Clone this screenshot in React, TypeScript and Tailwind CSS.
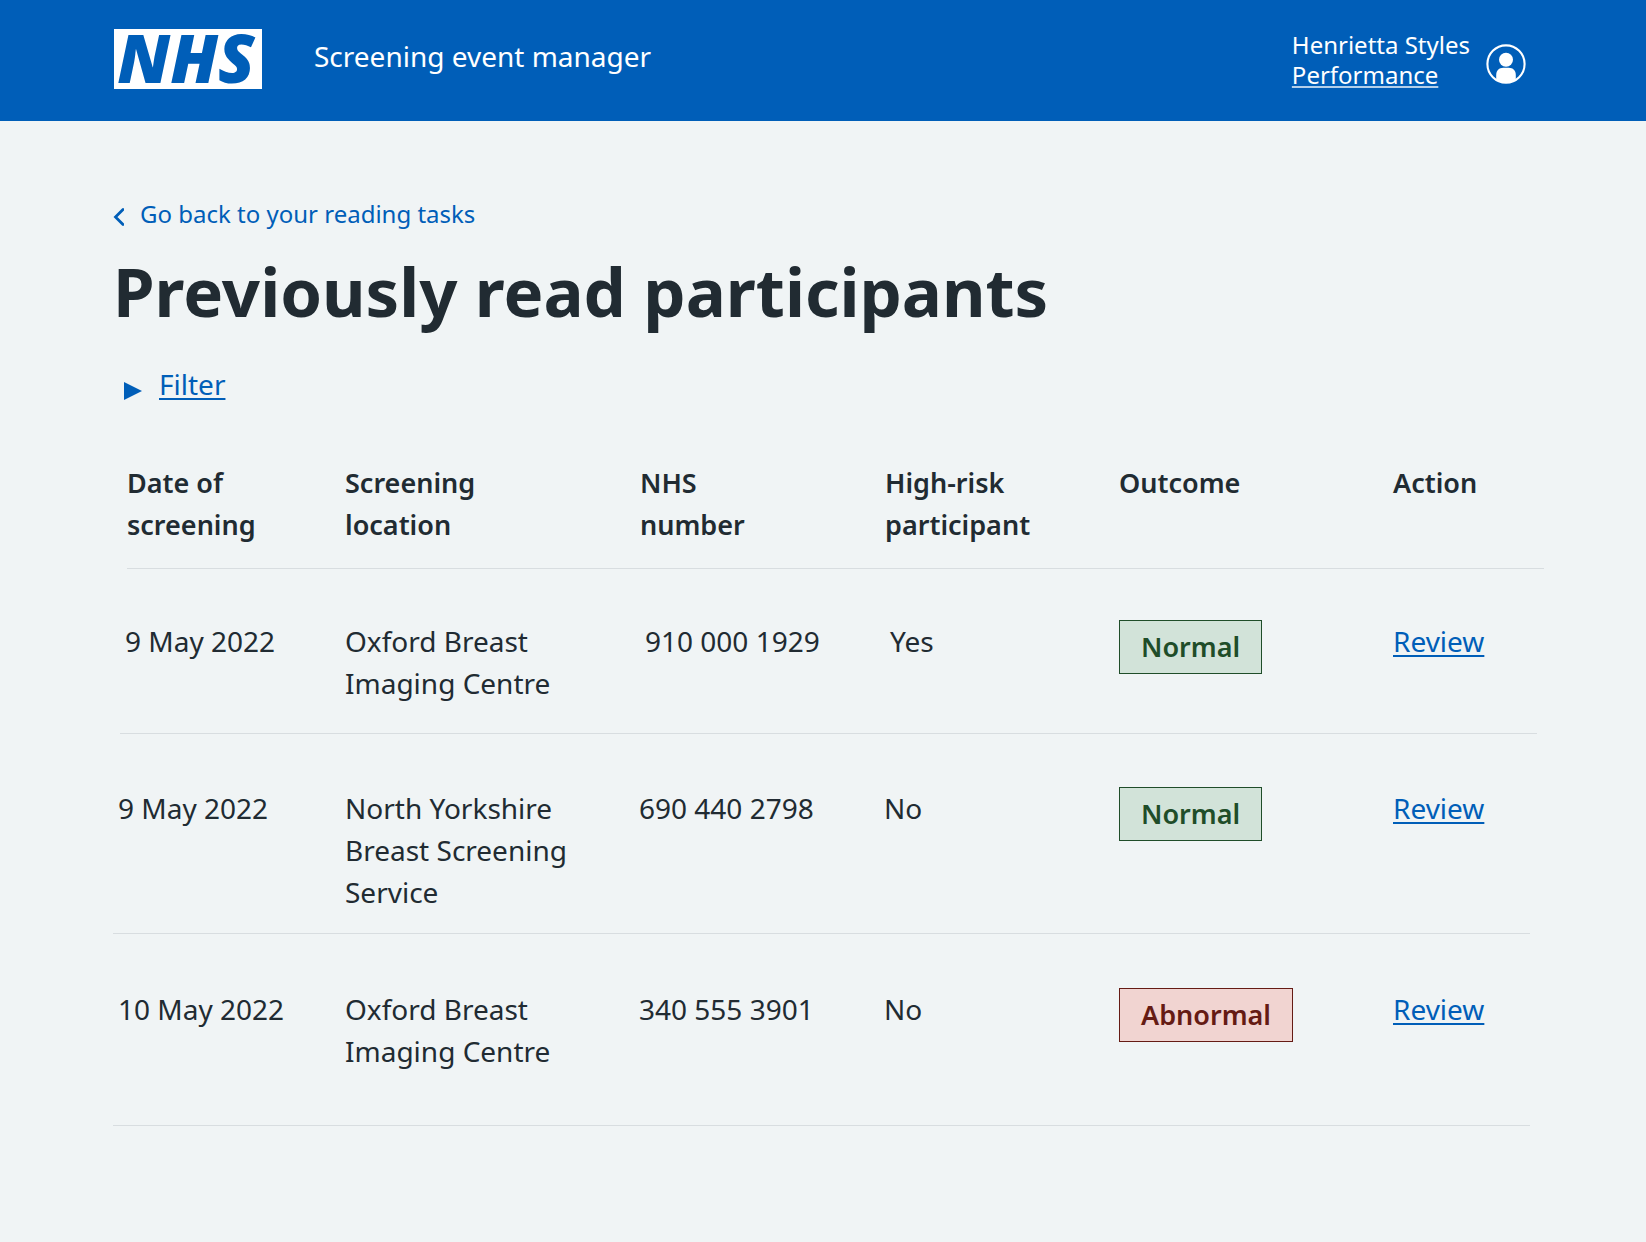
type Outcome = "Normal" | "Abnormal";

type Reading = {
  id: string;
  date: string;
  location: string;
  nhsNumber: string;
  highRisk: string;
  outcome: Outcome;
  layout: string;
};

const readings: Reading[] = [
  {
    id: "r1",
    date: "9 May 2022",
    location: "Oxford Breast Imaging Centre",
    nhsNumber: "910 000 1929",
    highRisk: "Yes",
    outcome: "Normal",
    layout: "ml-[7px] -mr-[7px] grid-cols-[225fr_300fr_245fr_229fr_274fr_144fr] pt-[51px] pb-[29px]",
  },
  {
    id: "r2",
    date: "9 May 2022",
    location: "North Yorkshire Breast Screening Service",
    nhsNumber: "690 440 2798",
    highRisk: "No",
    outcome: "Normal",
    layout: "grid-cols-[232fr_294fr_245fr_235fr_274fr_137fr] pt-[53px] pb-5",
  },
  {
    id: "r3",
    date: "10 May 2022",
    location: "Oxford Breast Imaging Centre",
    nhsNumber: "340 555 3901",
    highRisk: "No",
    outcome: "Abnormal",
    layout: "grid-cols-[232fr_294fr_245fr_235fr_274fr_137fr] pt-[54px] pb-[53px]",
  },
];

const tagStyles: Record<Outcome, string> = {
  Normal: "border-[#1f4d29] bg-[#d2e3d9] text-[#1f4d29]",
  Abnormal: "border-[#651b14] bg-[#f1d4d1] text-[#651b14]",
};

function Logo() {
  return (
    <a
      href="#home"
      aria-label="NHS home"
      className="flex h-[60px] w-[148px] justify-center bg-white pr-1 text-[67px] leading-[56px] font-black text-[#005eb8] italic"
    >
      NHS
    </a>
  );
}

function Avatar() {
  return (
    <svg viewBox="0 0 40 40" className="mt-3.5 size-10" aria-hidden="true">
      <circle cx="20" cy="20" r="18.6" fill="none" stroke="white" strokeWidth="2.1" />
      <circle cx="20" cy="15.7" r="7" fill="white" />
      <path d="M10.2 35.5V31c0-4.500 2.800-7.300 7.200-7.300h5.200c4.400 0 7.200 2.800 7.200 7.300v4.500c-2.800 2.300-6 3.500-9.800 3.500s-7-1.200-9.800-3.500z" fill="white" />
    </svg>
  );
}

function Header() {
  return (
    <header className="flex items-start justify-between bg-[#005eb8] pt-[29px] pr-[120px] pb-[31px] pl-[114px] text-white">
      <div className="flex gap-[52px]">
        <Logo />
        <span className="text-[28px] leading-[54px]">Screening event manager</span>
      </div>
      <div className="flex gap-4 pt-px">
        <div className="text-2xl leading-[30px]">
          <p>Henrietta Styles</p>
          <a href="#performance" className="underline decoration-white/70 decoration-2 underline-offset-2">
            Performance
          </a>
        </div>
        <Avatar />
      </div>
    </header>
  );
}

function ReadingsTable() {
  return (
    <table className="mt-[57px] block">
      <thead className="block text-[27px]">
        <tr className="-mr-[14px] ml-[14px] grid grid-cols-[218fr_295fr_245fr_234fr_274fr_151fr] border-b border-[#d8dde0] pb-[22px] text-left">
          <th scope="col" className="pr-12 font-semibold">Date of screening</th>
          <th scope="col" className="font-semibold">Screening<br />location</th>
          <th scope="col" className="font-semibold">NHS<br />number</th>
          <th scope="col" className="font-semibold">High-risk<br />participant</th>
          <th scope="col" className="font-semibold">Outcome</th>
          <th scope="col" className="font-semibold">Action</th>
        </tr>
      </thead>
      <tbody className="block">
        {readings.map((r) => (
          <tr key={r.id} className={"grid border-b border-[#d8dde0] " + r.layout}>
            <td className="pl-[5px]">{r.date}</td>
            <td className="pr-12">{r.location}</td>
            <td>{r.nhsNumber}</td>
            <td>{r.highRisk}</td>
            <td>
              <strong className={"inline-block border px-[21px] text-[27px] leading-[52px] font-semibold " + tagStyles[r.outcome]}>
                {r.outcome}
              </strong>
            </td>
            <td>
              <a href="#review" className="text-[#005eb8] underline decoration-2 underline-offset-3">
                Review
              </a>
            </td>
          </tr>
        ))}
      </tbody>
    </table>
  );
}

export default function App() {
  return (
    <div className="min-h-screen bg-[#f0f4f5] font-['Noto_Sans',sans-serif] text-[28px] leading-[42px] text-[#212b32]">
      <Header />
      <main className="pt-[78px] pr-[116px] pb-20 pl-[113px]">
        <a href="#tasks" className="flex w-fit items-center gap-4 text-2xl leading-[30px] text-[#005eb8]">
          <svg viewBox="0 0 11 18" className="mt-1.5 h-[18px] w-[11px]" fill="none" stroke="currentColor" strokeWidth="2.8" aria-hidden="true">
            <path d="M10 1.500 2.500 9 10 16.500" strokeLinecap="round" />
          </svg>
          Go back to your reading tasks
        </a>
        <h1 className="mt-[22px] text-[67px] leading-[80px] font-bold">Previously read participants</h1>
        <button type="button" aria-expanded="false" className="mt-8 ml-[11px] flex items-center gap-[17px] text-[#005eb8]">
          <svg viewBox="0 0 18 18" className="mt-3.5 size-[18px]" fill="currentColor" aria-hidden="true">
            <path d="M0 0 18 9 0 18z" />
          </svg>
          <span className="underline decoration-2 underline-offset-3">Filter</span>
        </button>
        <ReadingsTable />
      </main>
    </div>
  );
}
